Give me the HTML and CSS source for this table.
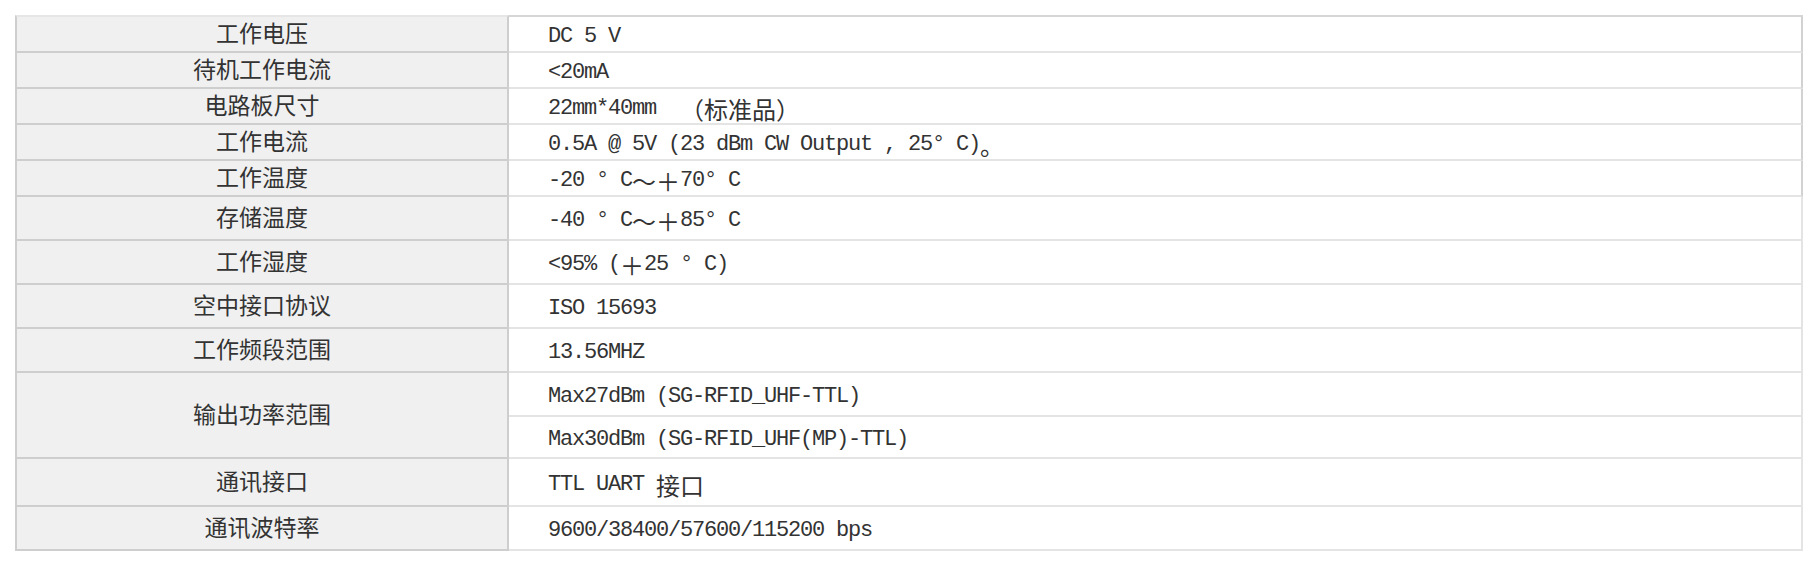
FILE: index.html
```html
<!DOCTYPE html>
<html lang="zh-CN">
<head>
<meta charset="utf-8">
<title>规格参数</title>
<link rel="stylesheet" href="styles.css">
</head>
<body>
<table class="spec">
  <tbody>
    <tr class="dk"><th scope="row">工作电压</th><td><div class="c h34">DC 5 V</div></td></tr>
    <tr class="dk"><th scope="row">待机工作电流</th><td><div class="c h34">&lt;20mA</div></td></tr>
    <tr class="dk"><th scope="row">电路板尺寸</th><td><div class="c h34">22mm*40mm  <span class="z">（标准品）</span></div></td></tr>
    <tr class="dk"><th scope="row">工作电流</th><td><div class="c h34">0.5A @ 5V (23 dBm CW Output , 25° C)<span class="z">。</span></div></td></tr>
    <tr class="dk"><th scope="row">工作温度</th><td><div class="c h34">-20 ° C<span class="z">～＋</span>70° C</div></td></tr>
    <tr><th scope="row">存储温度</th><td><div class="c h42">-40 ° C<span class="z">～＋</span>85° C</div></td></tr>
    <tr><th scope="row">工作湿度</th><td><div class="c h42">&lt;95% (<span class="z">＋</span>25 ° C)</div></td></tr>
    <tr><th scope="row">空中接口协议</th><td><div class="c h42">ISO 15693</div></td></tr>
    <tr><th scope="row">工作频段范围</th><td><div class="c h42">13.56MHZ</div></td></tr>
    <tr><th scope="row" rowspan="2">输出功率范围</th><td><div class="c h42">Max27dBm (SG-RFID_UHF-TTL)</div></td></tr>
    <tr><td><div class="c h40">Max30dBm (SG-RFID_UHF(MP)-TTL)</div></td></tr>
    <tr><th scope="row">通讯接口</th><td><div class="c h46">TTL UART <span class="z">接口</span></div></td></tr>
    <tr><th scope="row">通讯波特率</th><td><div class="c h42">9600/38400/57600/115200 bps</div></td></tr>
  </tbody>
</table>
</body>
</html>
```
FILE: styles.css
```css
html, body {
  margin: 0;
  background: #ffffff;
}

body {
  padding: 15px 0 0 15px;
}

.spec {
  border-collapse: separate;
  border-spacing: 0;
  table-layout: fixed;
  width: 1788px;
}

.spec th {
  width: 490px;
  padding: 0 0 4px;
  background: #f0f0f0;
  border-left: 2px solid #cecece;
  border-right: 2px solid #cecece;
  border-bottom: 2px solid #cecece;
  color: #333333;
  font-family: "Noto Sans CJK SC", sans-serif;
  font-size: 23px;
  font-weight: 400;
  line-height: 1;
  text-align: center;
  vertical-align: middle;
}

.spec td {
  padding: 0;
  background: #ffffff;
  border-right: 2px solid #e4e4e4;
  border-bottom: 2px solid #e4e4e4;
  vertical-align: middle;
}

.spec tr:first-child th {
  border-top: 2px solid #e6e6e6;
}

.spec tr:first-child td {
  border-top: 2px solid #d6d6d6;
}

.spec tr.dk td {
  border-right-color: #d2d2d2;
}

.c {
  box-sizing: border-box;
  display: flex;
  align-items: center;
  padding: 5px 0 0 39px;
  color: #333333;
  font-family: "Liberation Mono", "Noto Sans CJK SC", monospace;
  font-size: 22px;
  letter-spacing: -1.2px;
  line-height: 1;
  white-space: pre;
}

.z {
  font-family: "Noto Sans CJK SC", sans-serif;
  font-size: 24px;
  letter-spacing: 0;
  line-height: 1;
  vertical-align: 2px;
}

.h34 { height: 34px; }
.h40 { height: 40px; }
.h42 { height: 42px; }
.h46 { height: 46px; }
```
